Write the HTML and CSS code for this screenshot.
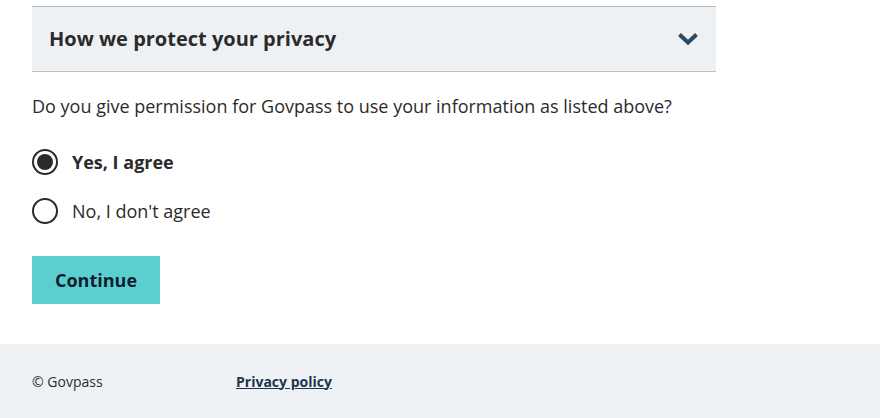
FILE: index.html
```html
<!DOCTYPE html>
<html lang="en">
<head>
<meta charset="utf-8">
<title>Govpass consent</title>
<link rel="stylesheet" href="styles.css">
</head>
<body>
<main class="main">
  <div class="accordion">
    <h2 class="accordion-title">How we protect your privacy</h2>
    <svg class="chevron" width="22" height="14" viewBox="0 0 22 14" aria-hidden="true">
      <path d="M2.5 2.5 L11 10.5 L19.5 2.5" fill="none" stroke="#2c4760" stroke-width="4" stroke-linecap="butt"/>
    </svg>
  </div>
  <form class="form">
    <p class="question">Do you give permission for Govpass to use your information as listed above?</p>
    <label class="radio-row first">
      <span class="radio checked"></span>
      <span class="radio-label bold">Yes, I agree</span>
    </label>
    <label class="radio-row">
      <span class="radio"></span>
      <span class="radio-label">No, I don't agree</span>
    </label>
    <button type="button" class="button">Continue</button>
  </form>
</main>
<footer class="footer">
  <span class="copyright">© Govpass</span>
  <a class="footer-link" href="#">Privacy policy</a>
</footer>
</body>
</html>
```

FILE: styles.css
```css
html, body {
  margin: 0;
  padding: 0;
}
body {
  font-family: "Open Sans", "Liberation Sans", sans-serif;
  color: #2b2b2b;
  background: #ffffff;
}
.main {
  padding: 6px 32px 40px 32px;
  width: 684px;
}
.accordion {
  display: flex;
  align-items: center;
  justify-content: space-between;
  height: 64px;
  background: #eef1f4;
  border-top: 1px solid #bdbdbd;
  border-bottom: 1px solid #bdbdbd;
  padding: 0 17px 0 17px;
}
.accordion-title {
  margin: 0 0 2px 0;
  font-size: 20px;
  font-weight: 700;
  color: #2b2b2b;
}
.chevron {
  display: block;
}
.form {
  display: flex;
  flex-direction: column;
  align-items: flex-start;
}
.question {
  margin: 21px 0 0 0;
  font-size: 18px;
  line-height: 26px;
}
.radio-row {
  display: flex;
  align-items: center;
  gap: 14px;
  height: 26px;
  margin-top: 23px;
}
.radio-row.first {
  margin-top: 30px;
}
.radio {
  box-sizing: border-box;
  width: 26px;
  height: 26px;
  border: 2px solid #2b2b2b;
  border-radius: 50%;
  display: flex;
  align-items: center;
  justify-content: center;
}
.radio.checked::after {
  content: "";
  width: 16px;
  height: 16px;
  border-radius: 50%;
  background: #2b2b2b;
}
.radio-label {
  font-size: 18px;
}
.radio-label.bold {
  font-weight: 700;
}
.button {
  margin-top: 32px;
  height: 48px;
  padding: 0 23px;
  background: #5bcfcf;
  border: none;
  font-family: "Open Sans", "Liberation Sans", sans-serif;
  font-size: 18px;
  font-weight: 700;
  color: #0d1e31;
}
.footer {
  display: flex;
  align-items: center;
  height: 74px;
  padding: 0 32px 0 32px;
  background: #eff2f5;
  font-size: 14px;
}
.copyright {
  width: 204px;
  color: #2b2b2b;
}
.footer-link {
  color: #1e3350;
  font-weight: 700;
  text-decoration: underline;
}
```
